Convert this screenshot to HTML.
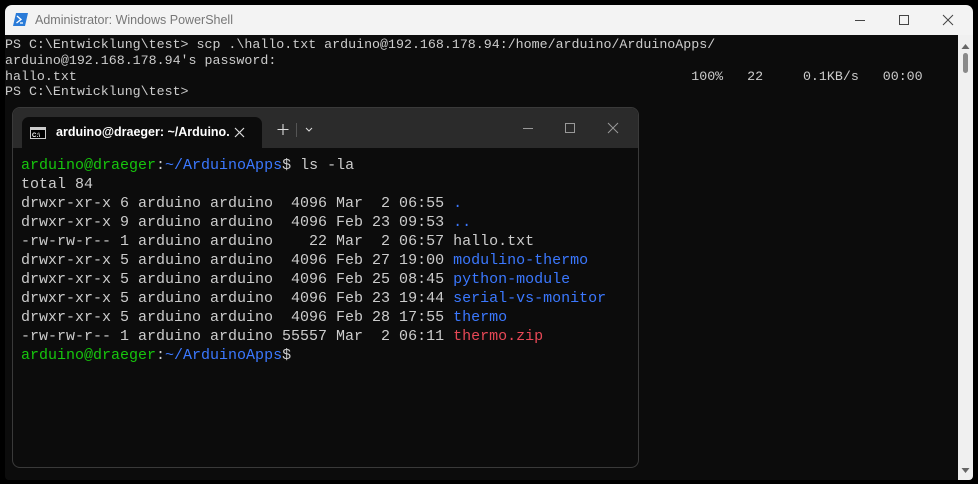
<!DOCTYPE html>
<html><head><meta charset="utf-8"><style>
*{margin:0;padding:0;box-sizing:border-box}
body{width:978px;height:484px;background:#000;position:relative;overflow:hidden;font-family:"Liberation Sans",sans-serif}
.win{position:absolute;left:5px;top:5px;width:968px;height:475px;background:#0c0c0c;border-radius:7px 7px 4px 4px;overflow:hidden}
.title{position:absolute;left:0;top:0;width:100%;height:30px;background:#f3f3f3;color:#777;font-size:12.5px}
.title .t{position:absolute;left:30px;top:8px}
.ps{position:absolute;left:0;top:30px;right:15px;bottom:0;background:#0c0c0c}
.out{position:absolute;left:0;top:2px;font-family:"Liberation Mono",monospace;font-size:13.3px;line-height:15.8px;color:#cccccc;white-space:pre}
.sb{position:absolute;right:0;top:30px;width:15px;bottom:0;background:#f0f0f0}
.inner{position:absolute;left:12px;top:107px;width:627px;height:361px;background:#0c0c0c;border:1px solid #3a3a3a;border-radius:8px;overflow:hidden}
.strip{position:absolute;left:0;top:0;width:100%;height:40px;background:#2b2b2b}
.tab{position:absolute;left:9px;top:9px;width:240px;height:31px;background:#0c0c0c;border-radius:7px 7px 0 0;color:#fff;font-size:12.5px;font-weight:bold}
.term{position:absolute;left:8px;top:48px;font-family:"Liberation Mono",monospace;font-size:15px;line-height:19px;color:#cccccc;white-space:pre}
.g{color:#16c60c}.b{color:#3b78ff}.r{color:#e74856}
</style></head><body>
<div class="win">
 <div class="title">
  <svg style="position:absolute;left:8px;top:8px" width="15" height="13" viewBox="0 0 15 13"><path d="M3 0H15L12 13H0Z" fill="#2a7bd8"/><path d="M4 3L8 6.5L3.5 10" stroke="#fff" stroke-width="1.4" fill="none"/><path d="M7 10H10" stroke="#fff" stroke-width="1.3"/></svg>
  <span class="t">Administrator: Windows PowerShell</span>
  <svg style="position:absolute;left:850px;top:9px" width="110" height="12" viewBox="0 0 110 12"><path d="M0 6.5H10" stroke="#444" stroke-width="1"/><rect x="44.5" y="1.5" width="9" height="9" fill="none" stroke="#444"/><path d="M88 1L98 11M98 1L88 11" stroke="#444"/></svg>
 </div>
 <div class="ps"><div class="out">PS C:\Entwicklung\test&gt; scp .\hallo.txt arduino@192.168.178.94:/home/arduino/ArduinoApps/
arduino@192.168.178.94's password:
hallo.txt                                                                             100%   22     0.1KB/s   00:00
PS C:\Entwicklung\test&gt;</div></div>
 <div class="sb">
  <svg style="position:absolute;left:3px;top:8px" width="9" height="40" viewBox="0 0 9 40"><path d="M0.5 6L4.5 1L8.5 6Z" fill="#666"/><rect x="2" y="10" width="5" height="20" rx="2.5" fill="#8a8a8a"/></svg>
  <svg style="position:absolute;left:3px;bottom:6px" width="9" height="6" viewBox="0 0 9 6"><path d="M0.5 0L4.5 5L8.5 0Z" fill="#666"/></svg>
 </div>
</div>
<div class="inner">
 <div class="strip">
  <div class="tab">
   <svg style="position:absolute;left:8px;top:10px" width="16" height="12" viewBox="0 0 16 12"><rect x="0.5" y="0.5" width="15" height="11" fill="#000" stroke="#ccc"/><rect x="1" y="1" width="14" height="2" fill="#ccc"/><text x="2" y="10" font-size="6" fill="#fff" font-family="Liberation Sans">C:\</text></svg>
   <span style="position:absolute;left:34px;top:8px">arduino@draeger: ~/Arduino.</span>
   <svg style="position:absolute;left:212px;top:10px" width="11" height="11" viewBox="0 0 11 11"><path d="M1 1L10 10M10 1L1 10" stroke="#ddd" stroke-width="1.2"/></svg>
  </div>
  <svg style="position:absolute;left:264px;top:15px" width="40" height="14" viewBox="0 0 40 14"><path d="M6 1V12M0.5 6.5H11.5" stroke="#ddd" stroke-width="1.1"/><path d="M19.5 -6V20" stroke="#555"/><path d="M29 5L32 8L35 5" stroke="#ddd" fill="none"/></svg>
  <svg style="position:absolute;left:510px;top:14px" width="100" height="12" viewBox="0 0 100 12"><path d="M0 6.5H10" stroke="#999"/><rect x="42.5" y="1.5" width="9" height="9" fill="none" stroke="#999"/><path d="M85 1L95 11M95 1L85 11" stroke="#999"/></svg>
 </div>
 <div class="term"><span class="g">arduino@draeger</span>:<span class="b">~/ArduinoApps</span>$ ls -la
total 84
drwxr-xr-x 6 arduino arduino  4096 Mar  2 06:55 <span class="b">.</span>
drwxr-xr-x 9 arduino arduino  4096 Feb 23 09:53 <span class="b">..</span>
-rw-rw-r-- 1 arduino arduino    22 Mar  2 06:57 hallo.txt
drwxr-xr-x 5 arduino arduino  4096 Feb 27 19:00 <span class="b">modulino-thermo</span>
drwxr-xr-x 5 arduino arduino  4096 Feb 25 08:45 <span class="b">python-module</span>
drwxr-xr-x 5 arduino arduino  4096 Feb 23 19:44 <span class="b">serial-vs-monitor</span>
drwxr-xr-x 5 arduino arduino  4096 Feb 28 17:55 <span class="b">thermo</span>
-rw-rw-r-- 1 arduino arduino 55557 Mar  2 06:11 <span class="r">thermo.zip</span>
<span class="g">arduino@draeger</span>:<span class="b">~/ArduinoApps</span>$</div>
</div>
</body></html>
